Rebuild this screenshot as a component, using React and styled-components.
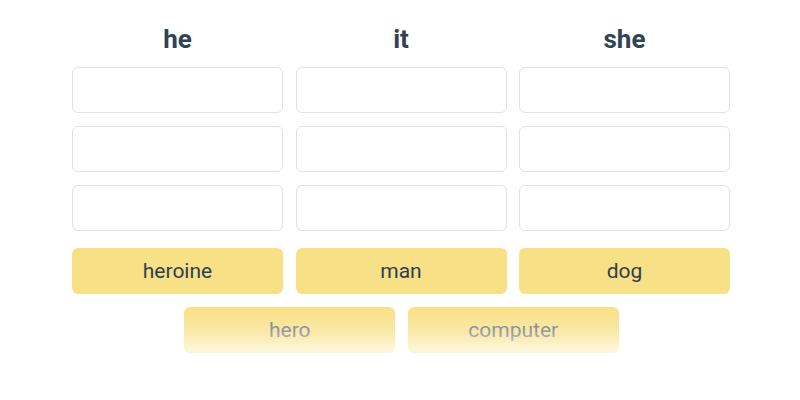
import React from "react";
import styled, { createGlobalStyle } from "styled-components";

const Global = createGlobalStyle`
  html, body { margin: 0; padding: 0; background: #fff; }
  body { font-family: Roboto, "Open Sans", "Liberation Sans", sans-serif; }
`;

const Page = styled.div`
  width: 659px;
  margin-left: 72px;
  padding-top: 19px;
`;

const Grid = styled.div`
  display: grid;
  grid-template-columns: repeat(${(p) => p.cols}, 211px);
  column-gap: 12.5px;
  row-gap: 13px;
  justify-content: ${(p) => (p.center ? "center" : "start")};
`;

const Heading = styled.div`
  height: 40px;
  line-height: 40px;
  text-align: center;
  font-size: 26px;
  font-weight: 700;
  color: #2f4256;
  margin-bottom: -5px;
`;

const Column = styled.div`
  display: flex;
  flex-direction: column;
  gap: 13px;
`;

const Slot = styled.div`
  box-sizing: border-box;
  height: 46px;
  border: 1px solid #dde3e8;
  border-radius: 6px;
  background: #fff;
`;

const Chip = styled.div`
  box-sizing: border-box;
  height: 46px;
  border-radius: 6px;
  background: #f8e086;
  display: flex;
  align-items: center;
  justify-content: center;
  font-size: 21px;
  color: #2f3e4e;
`;

const ChipRow = styled(Grid)`
  margin-top: 17px;
`;

const FadedRow = styled.div`
  position: relative;
  margin-top: 13px;
  &::after {
    content: "";
    position: absolute;
    inset: 0;
    background: linear-gradient(
      rgba(255, 255, 255, 0),
      rgba(255, 255, 255, 0.25) 50%,
      rgba(255, 255, 255, 0.75)
    );
    pointer-events: none;
  }
`;

const FadedChip = styled(Chip)`
  color: #6a7480;
`;

const heads = ["he", "it", "she"];

export default function App() {
  return (
    <>
      <Global />
      <Page>
        <Grid cols={3}>
          {heads.map((h) => (
            <Column key={h}>
              <Heading>{h}</Heading>
              <Slot />
              <Slot />
              <Slot />
            </Column>
          ))}
        </Grid>
        <ChipRow cols={3}>
          <Chip>heroine</Chip>
          <Chip>man</Chip>
          <Chip>dog</Chip>
        </ChipRow>
        <FadedRow>
          <Grid cols={2} center>
            <FadedChip>hero</FadedChip>
            <FadedChip>computer</FadedChip>
          </Grid>
        </FadedRow>
      </Page>
    </>
  );
}
